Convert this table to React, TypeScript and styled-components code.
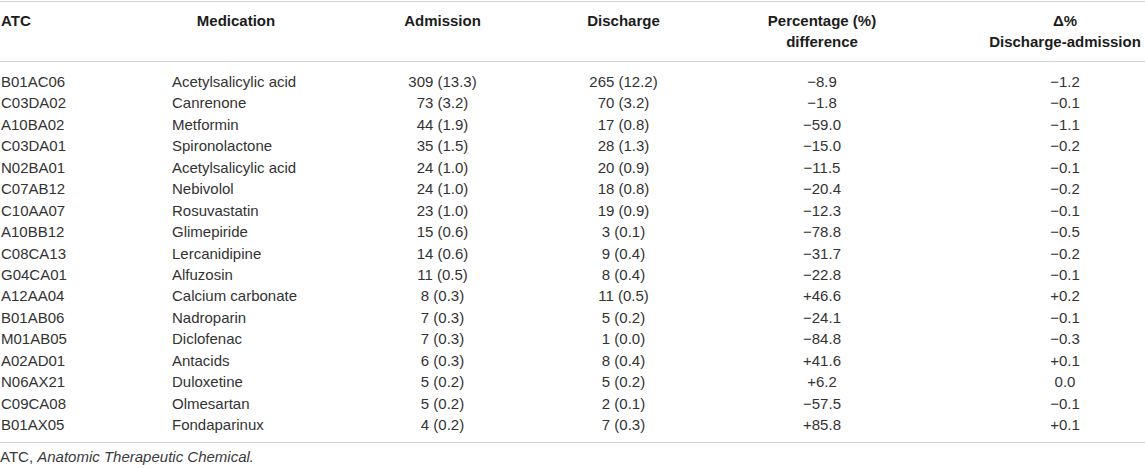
import styled, { createGlobalStyle } from 'styled-components'

const GlobalStyle = createGlobalStyle`
  html, body {
    margin: 0;
    padding: 0;
    background: #ffffff;
  }
  body {
    font-family: "Liberation Sans", Arial, Helvetica, sans-serif;
    font-size: 15px;
    color: #333333;
  }
`

interface Row {
  atc: string
  medication: string
  admission: string
  discharge: string
  pct: string
  delta: string
}

const rows: Row[] = [
  { atc: 'B01AC06', medication: 'Acetylsalicylic acid', admission: '309 (13.3)', discharge: '265 (12.2)', pct: '−8.9', delta: '−1.2' },
  { atc: 'C03DA02', medication: 'Canrenone', admission: '73 (3.2)', discharge: '70 (3.2)', pct: '−1.8', delta: '−0.1' },
  { atc: 'A10BA02', medication: 'Metformin', admission: '44 (1.9)', discharge: '17 (0.8)', pct: '−59.0', delta: '−1.1' },
  { atc: 'C03DA01', medication: 'Spironolactone', admission: '35 (1.5)', discharge: '28 (1.3)', pct: '−15.0', delta: '−0.2' },
  { atc: 'N02BA01', medication: 'Acetylsalicylic acid', admission: '24 (1.0)', discharge: '20 (0.9)', pct: '−11.5', delta: '−0.1' },
  { atc: 'C07AB12', medication: 'Nebivolol', admission: '24 (1.0)', discharge: '18 (0.8)', pct: '−20.4', delta: '−0.2' },
  { atc: 'C10AA07', medication: 'Rosuvastatin', admission: '23 (1.0)', discharge: '19 (0.9)', pct: '−12.3', delta: '−0.1' },
  { atc: 'A10BB12', medication: 'Glimepiride', admission: '15 (0.6)', discharge: '3 (0.1)', pct: '−78.8', delta: '−0.5' },
  { atc: 'C08CA13', medication: 'Lercanidipine', admission: '14 (0.6)', discharge: '9 (0.4)', pct: '−31.7', delta: '−0.2' },
  { atc: 'G04CA01', medication: 'Alfuzosin', admission: '11 (0.5)', discharge: '8 (0.4)', pct: '−22.8', delta: '−0.1' },
  { atc: 'A12AA04', medication: 'Calcium carbonate', admission: '8 (0.3)', discharge: '11 (0.5)', pct: '+46.6', delta: '+0.2' },
  { atc: 'B01AB06', medication: 'Nadroparin', admission: '7 (0.3)', discharge: '5 (0.2)', pct: '−24.1', delta: '−0.1' },
  { atc: 'M01AB05', medication: 'Diclofenac', admission: '7 (0.3)', discharge: '1 (0.0)', pct: '−84.8', delta: '−0.3' },
  { atc: 'A02AD01', medication: 'Antacids', admission: '6 (0.3)', discharge: '8 (0.4)', pct: '+41.6', delta: '+0.1' },
  { atc: 'N06AX21', medication: 'Duloxetine', admission: '5 (0.2)', discharge: '5 (0.2)', pct: '+6.2', delta: '0.0' },
  { atc: 'C09CA08', medication: 'Olmesartan', admission: '5 (0.2)', discharge: '2 (0.1)', pct: '−57.5', delta: '−0.1' },
  { atc: 'B01AX05', medication: 'Fondaparinux', admission: '4 (0.2)', discharge: '7 (0.3)', pct: '+85.8', delta: '+0.1' },
]

const Wrapper = styled.div`
  padding-top: 1px;
  width: 1145px;
`

const Table = styled.div`
  border-top: 1px solid #d4d4d4;
  border-bottom: 1px solid #d4d4d4;
`

const columns = '172px 190px 161px 201px 196px 1fr'

const HeadRow = styled.div`
  display: grid;
  grid-template-columns: ${columns};
  padding: 8px 0 9px;
  border-bottom: 1px solid #d4d4d4;
  font-weight: bold;
  color: #1c1c1c;
  line-height: 21px;
`

const Body = styled.div`
  padding: 9px 0 7px;
`

const BodyRow = styled.div`
  display: grid;
  grid-template-columns: ${columns};
  line-height: 21.43px;
`

const Cell = styled.div<{ $align?: 'left' | 'center'; $padLeft?: number; $padRight?: number }>`
  text-align: ${(p) => p.$align ?? 'center'};
  padding-left: ${(p) => p.$padLeft ?? 0}px;
  padding-right: ${(p) => p.$padRight ?? 0}px;
  white-space: nowrap;
`

const Footnote = styled.div`
  padding-top: 4px;
  line-height: 20px;
  color: #3a3a3a;

  em {
    font-style: italic;
  }
`

export default function App() {
  return (
    <Wrapper>
      <GlobalStyle />
      <Table>
        <HeadRow>
          <Cell $align="left" $padLeft={1}>ATC</Cell>
          <Cell $padRight={62}>Medication</Cell>
          <Cell>Admission</Cell>
          <Cell>Discharge</Cell>
          <Cell>
            Percentage (%)
            <br />
            difference
          </Cell>
          <Cell $padLeft={65}>
            Δ%
            <br />
            Discharge-admission
          </Cell>
        </HeadRow>
        <Body>
          {rows.map((r) => (
            <BodyRow key={r.atc}>
              <Cell $align="left" $padLeft={1}>{r.atc}</Cell>
              <Cell $align="left">{r.medication}</Cell>
              <Cell>{r.admission}</Cell>
              <Cell>{r.discharge}</Cell>
              <Cell>{r.pct}</Cell>
              <Cell $padLeft={65}>{r.delta}</Cell>
            </BodyRow>
          ))}
        </Body>
      </Table>
      <Footnote>
        ATC, <em>Anatomic Therapeutic Chemical.</em>
      </Footnote>
    </Wrapper>
  )
}
